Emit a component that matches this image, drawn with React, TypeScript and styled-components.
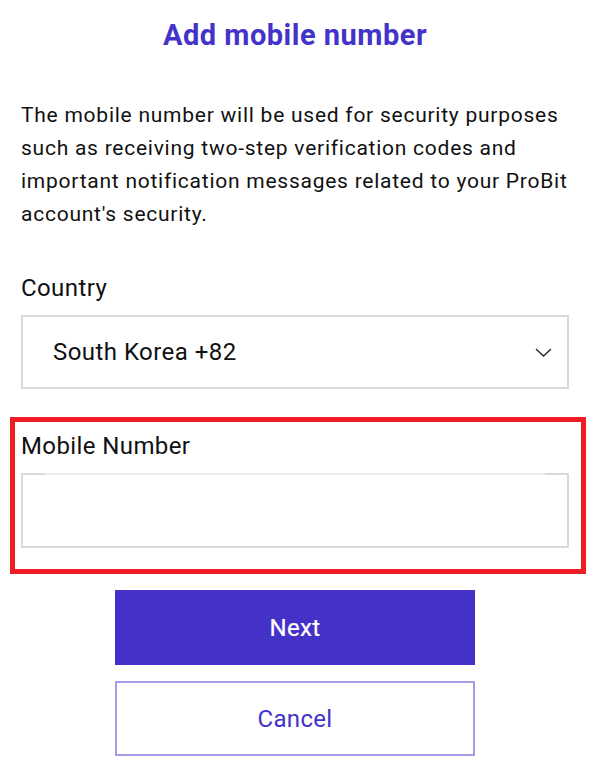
import React from "react";
import styled, { createGlobalStyle } from "styled-components";

const Global = createGlobalStyle`
  html, body { margin: 0; padding: 0; background: #fff; }
  body { font-family: Roboto, "Liberation Sans", sans-serif; color: #111; }
  * { box-sizing: border-box; }
`;

const Page = styled.div`
  width: 595px;
  padding: 0 26px 0 21px;
  display: flex;
  flex-direction: column;
`;

const Title = styled.h1`
  margin: 16px 0 0;
  font-size: 29px;
  line-height: 38px;
  font-weight: 700;
  letter-spacing: 0.5px;
  color: #4433c9;
  text-align: center;
`;

const Intro = styled.p`
  margin: 45px 0 0;
  font-size: 21px;
  line-height: 33px;
  letter-spacing: 0.75px;
  color: #111;
`;

const Field = styled.div`
  display: flex;
  flex-direction: column;
`;

const Highlight = styled.div`
  margin: 28px -17px 0 -11px;
  padding: 10px 12px 21px 6px;
  border: 5px solid #ee1c25;
`;

const Label = styled.label`
  font-size: 24px;
  line-height: 28px;
  letter-spacing: 0.4px;
  color: #111;
  margin-bottom: 13px;
`;

const CountryField = styled(Field)`
  margin-top: 43px;
`;

const SelectBox = styled.div`
  height: 74px;
  border: 2px solid #d9d9d9;
  display: flex;
  align-items: center;
  justify-content: space-between;
  padding: 0 15px 0 30px;
  font-size: 24px;
  letter-spacing: 0.45px;
  color: #111;
`;

const InputBox = styled.div`
  position: relative;
  height: 75px;
  border: 2px solid #d9d9d9;
  &::before {
    content: "";
    position: absolute;
    top: -2px;
    left: 22px;
    right: 22px;
    height: 2px;
    background: #ececec;
  }
`;

const Buttons = styled.div`
  margin-top: 16px;
  display: flex;
  flex-direction: column;
  align-items: center;
  gap: 16px;
`;

const Button = styled.button<{ $primary?: boolean }>`
  width: 360px;
  height: 75px;
  font-family: Roboto, "Liberation Sans", sans-serif;
  font-size: 24px;
  letter-spacing: 0.3px;
  font-weight: 400;
  cursor: pointer;
  border: 2px solid ${(p) => (p.$primary ? "#4432c8" : "#a59be6")};
  background: ${(p) => (p.$primary ? "#4432c8" : "#fff")};
  color: ${(p) => (p.$primary ? "#fff" : "#4432c8")};
  -webkit-text-stroke: ${(p) => (p.$primary ? "0.2px #fff" : "0")};
`;

const Chevron = () => (
  <svg width="17" height="9" viewBox="0 0 17 9" fill="none">
    <path d="M1 1l7.5 7 7.5-7" stroke="#222" strokeWidth="1.3" />
  </svg>
);

export default function App() {
  return (
    <>
      <Global />
      <Page>
        <Title>Add mobile number</Title>
        <Intro>
          The mobile number will be used for security purposes such as receiving
          two-step verification codes and important notification messages
          related to your ProBit account's security.
        </Intro>
        <CountryField>
          <Label>Country</Label>
          <SelectBox>
            <span>South Korea +82</span>
            <Chevron />
          </SelectBox>
        </CountryField>
        <Highlight>
          <Field>
            <Label>Mobile Number</Label>
            <InputBox />
          </Field>
        </Highlight>
        <Buttons>
          <Button $primary>Next</Button>
          <Button>Cancel</Button>
        </Buttons>
      </Page>
    </>
  );
}
